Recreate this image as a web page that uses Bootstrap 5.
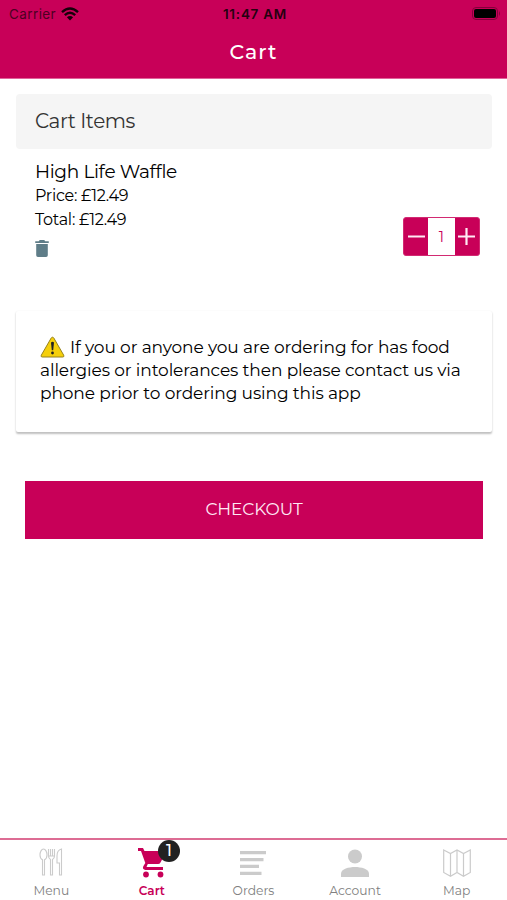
<!DOCTYPE html>
<html lang="en">
<head>
<meta charset="utf-8">
<meta name="viewport" content="width=device-width, initial-scale=1">
<title>Cart</title>
<link rel="stylesheet" href="https://cdn.jsdelivr.net/npm/bootstrap@5.3.0/dist/css/bootstrap.min.css">
<style>
  :root { --brand: #c80058; }
  body { font-family: Montserrat, Inter, "Open Sans", sans-serif; color: #000; background: #fff; height: 900px; overflow: hidden; }
  svg { display: block; flex: none; }
  .brand-bg { background: var(--brand); }
  .app-header { height: 79px; border-bottom: 1px solid #e0639a; }
  .status-line { height: 27px; padding: 0 6px 0 9px; font: 13.5px/28px Inter, sans-serif; color: #25000f; }
  .status-line > div { flex: 1 1 0; }
  .carrier { letter-spacing: .4px; color: #4d0022; }
  .wifi { margin-left: 5px; }
  .clock { font-weight: 600; letter-spacing: .75px; }
  .screen-title { font-size: 20.5px; line-height: 50px; font-weight: 500; letter-spacing: 1px; }
  .content-area { padding: 15px 15px 0 16px; }
  .section-title { height: 55px; padding-left: 19px; background: #f5f5f5; border-radius: 4px; font-size: 20px; line-height: 55px; letter-spacing: -.45px; color: #333; }
  .cart-item { height: 162px; padding: 11px 12px 0 19px; }
  .item-name { font-size: 18.5px; line-height: 24px; letter-spacing: -.33px; }
  .item-line { font-size: 16px; line-height: 24px; letter-spacing: -.27px; }
  .stepper { width: 77px; height: 39px; margin-top: 57px; border: 1px solid #d22a72; border-radius: 3px; background: var(--brand); }
  .step-btn { width: 25px; height: 37px; }
  .step-count { width: 27px; background: #fff; color: var(--brand); font-size: 14.5px; line-height: 38px; }
  .notice { height: 121px; padding: 25px 20px 0 24px; border: 0; border-radius: 2px; box-shadow: 0 1.5px 2px rgba(0,0,0,.25); font-size: 17px; line-height: 23.1px; letter-spacing: -.11px; color: #000; white-space: nowrap; }
  .notice-sign { margin: -1px 5px 0 0; }
  .checkout { height: 58px; margin: 49px 9px 0 9px; border-radius: 0; background: var(--brand); color: #ffe9f4; font-size: 17px; letter-spacing: -.1px; border: 0; }
  .checkout:hover { background: #ad004c; color: #fff; }
  .tab-bar { height: 62px; border-top: 2px solid #dd6c94; }
  .tab-item { flex: 1 1 0; padding: 8px 0 0 1px; color: #808080; font-size: 12.3px; line-height: 14px; text-decoration: none; }
  .tab-item svg { margin-bottom: 6px; }
  .tab-item.current { color: var(--brand); font-weight: 600; font-size: 12px; padding-left: 0; }
  .count-badge { left: 21px; top: -8px; width: 22px; height: 22px; border-radius: 50%; background: #222; color: #fff; font-size: 16px; line-height: 22px; font-weight: 500; }
</style>
<script src="https://cdn.jsdelivr.net/npm/bootstrap@5.3.0/dist/js/bootstrap.bundle.min.js"></script>
</head>
<body class="d-flex flex-column">
<header class="app-header brand-bg">
  <div class="status-line d-flex align-items-center">
    <div class="d-flex align-items-center"><span class="carrier">Carrier</span>
      <svg class="wifi" width="18" height="14" viewBox="0 0 18 14" fill="none" stroke="#16000a" stroke-width="2.4"><path d="M1 5.2Q9-2 17 5.2M3.8 8.2Q9 3.5 14.2 8.2"/><path d="M9 13.5 5.9 10.3Q9 7.8 12.1 10.3Z" fill="#16000a" stroke="none"/></svg>
    </div>
    <div class="clock text-center">11:47 AM</div>
    <div class="d-flex justify-content-end"><svg width="29" height="13" viewBox="0 0 29 13"><rect x=".5" y=".5" width="25" height="12" rx="3.5" fill="none" stroke="#85003b"/><rect x="2" y="2" width="22" height="9" rx="2" fill="#000"/><path d="M27 4q2 2.5 0 5z" fill="#85003b"/></svg></div>
  </div>
  <h1 class="screen-title text-white text-center m-0">Cart</h1>
</header>

<main class="content-area flex-grow-1">
  <h2 class="section-title m-0 fw-normal">Cart Items</h2>
  <section class="cart-item d-flex justify-content-between align-items-start">
    <div>
      <div class="item-name">High Life Waffle</div>
      <div class="item-line">Price: £12.49</div>
      <div class="item-line">Total: £12.49</div>
      <svg class="mt-1 pt-1" width="14" height="21" viewBox="0 0 14 17.600" fill="#5f7d88"><path d="M0 1.200h3.600L4.700 0h4.600l1.100 1.200H14V3H0zM1 4.200h12v11.600q0 1.800-1.800 1.800H2.800Q1 17.600 1 15.800z"/></svg>
    </div>
    <div class="stepper d-flex overflow-hidden">
      <div class="step-btn d-flex align-items-center justify-content-center"><svg width="17" height="17" viewBox="0 0 17 17" stroke="#ffeaf4" stroke-width="2.200"><path d="M0 8.500h17"/></svg></div>
      <div class="step-count text-center">1</div>
      <div class="step-btn d-flex align-items-center justify-content-center"><svg width="17" height="17" viewBox="0 0 17 17" stroke="#ffeaf4" stroke-width="2.200"><path d="M0 8.500h17M8.500 0v17"/></svg></div>
    </div>
  </section>
  <section class="notice card d-block">
    <div class="d-flex align-items-center"><svg class="notice-sign" width="25" height="22" viewBox="0 0 25 22"><path d="M12.500 1.200Q13.300 1.200 13.800 2L23.700 19.200Q24.500 21 22.800 21H2.200Q.5 21 1.300 19.200L11.200 2Q11.700 1.200 12.500 1.200Z" fill="#f5cf0b" stroke="#97821c"/><path d="M11 6.500q1.500-1.300 3 0l-.8 7.700h-1.400z" fill="#222"/><circle cx="12.500" cy="17" r="1.400" fill="#222"/></svg><span>If you or anyone you are ordering for has food</span></div>
    <div>allergies or intolerances then please contact us via</div>
    <div>phone prior to ordering using this app</div>
  </section>
  <div class="d-grid"><button class="checkout btn" type="button">CHECKOUT</button></div>
</main>

<nav class="tab-bar d-flex">
  <a class="tab-item d-flex flex-column align-items-center" href="#">
    <svg width="24" height="30" viewBox="0 0 24 30" fill="none" stroke="#cbcbcb" stroke-width="1.100"><path d="M4.500 1C2.500 1 1 4 1 7c0 2.500 1 4 2.500 4.700V27h2V11.700C7 11 8 9.500 8 7c0-3-1.500-6-3.500-6zM9.500 1v7q0 2.500 2 3.500v15.500h2V11.500q2-1 2-3.500V1M11.500 1v7M13.500 1v7M9.500 8h6M22.500 1v26h-2V15H18V8q0-6 4.500-7z"/></svg>
    <span>Menu</span>
  </a>
  <a class="tab-item current d-flex flex-column align-items-center" href="#">
    <div class="position-relative">
      <svg width="30" height="30" viewBox="0 0 30 30" fill="#c80058"><path d="M1 0h5l1.500 3H28q1.500 0 .8 1.500L23.500 14.500q-.8 1.500-2.500 1.500H10.800L9.500 19H26v3H8.500q-3.500-.5-2.200-3.700L8.300 15 4 3H1z"/><circle cx="9" cy="26.500" r="2.900"/><circle cx="23.500" cy="26.500" r="2.900"/></svg>
      <span class="count-badge position-absolute text-center">1</span>
    </div>
    <span>Cart</span>
  </a>
  <a class="tab-item d-flex flex-column align-items-center" href="#">
    <svg width="26" height="30" viewBox="0 0 26 30" fill="#cbcbcb"><path d="M0 3h26v3.200H0zM0 10h23.500v3.200H0zM0 16.800h19V20H0zM0 23.800h21.500V27H0z"/></svg>
    <span>Orders</span>
  </a>
  <a class="tab-item d-flex flex-column align-items-center" href="#">
    <svg width="28" height="30" viewBox="0 0 28 30" fill="#cbcbcb"><circle cx="14" cy="8.500" r="7"/><path d="M0 29v-3.500C0 21 8 19 14 19s14 2 14 6.500V29z"/></svg>
    <span>Account</span>
  </a>
  <a class="tab-item d-flex flex-column align-items-center" href="#">
    <svg width="28" height="30" viewBox="0 0 28 30" fill="none" stroke="#cbcbcb" stroke-width="1.200"><path d="M.7 2 7.500 5.500 14 2l6.500 3.500L27.300 2v22.500l-6.800 3.700-6.500-3.700-6.500 3.700L.7 24.500zM7.500 5.500v22.700M14 2v22.500M20.500 5.500v22.700"/></svg>
    <span>Map</span>
  </a>
</nav>
</body>
</html>
